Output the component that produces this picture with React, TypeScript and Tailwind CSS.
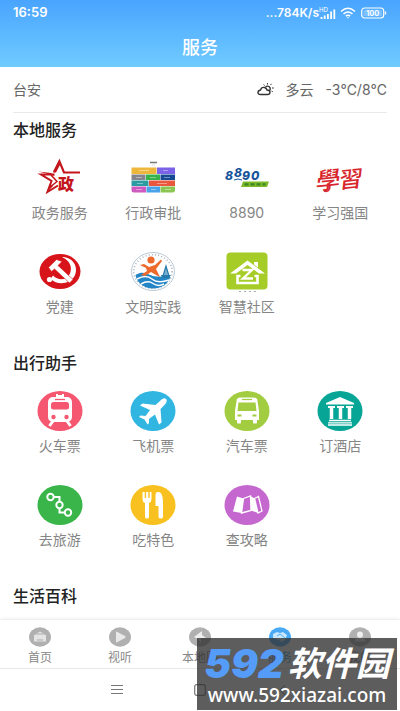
import type { ReactNode } from "react";

type Service = { label: string; icon: ReactNode };

function Disc({ color, children }: { color: string; children: ReactNode }) {
  return (
    <svg width="46" height="42" viewBox="0 0 46 42" fill="none" aria-hidden="true">
      <ellipse cx="23" cy="21" rx="22.500" ry="20" fill={color} />
      {children}
    </svg>
  );
}

const StarIcon = (
  <svg width="46" height="42" viewBox="0 0 46 42" fill="none" aria-hidden="true">
    <path d="M17 15 L22.500 4.500 L27 15.500 H43" stroke="#c4161c" strokeWidth="2.200" />
    <path d="M17.500 17.500 H4 L14.500 24 L10.500 35 L21 28.500" stroke="#c4161c" strokeWidth="2" />
    <path d="M14 18 L20 24.500 L14.500 29" stroke="#c4161c" strokeWidth="1.500" />
    <path d="M22.500 1.500 L16 15.500 L19 15.500 L23 8 Z M1.500 14.500 L14 16 L18 19 Z M9 36.500 L13 27 L16 29 Z" fill="#c4161c" />
    <text x="21" y="33" fontSize="16" fontWeight="900" fill="#c4161c" fontFamily="Noto Sans CJK SC, sans-serif">政</text>
  </svg>
);

const BlocksIcon = (
  <svg width="46" height="42" viewBox="0 0 46 42" aria-hidden="true">
    <path d="M20 5.500h7" stroke="#777" strokeWidth="1.500" />
    <path d="M22 8h3" stroke="#ddd" strokeWidth="1" />
    <rect x="1.500" y="10.500" width="25" height="6.500" fill="#efb63c" />
    <rect x="27" y="10.500" width="18" height="6.500" fill="#7b62e8" />
    <rect x="1.500" y="17.500" width="14" height="5.500" fill="#84858d" />
    <rect x="16" y="17.500" width="14" height="5.500" fill="#35b34a" />
    <rect x="30.500" y="17.500" width="14.500" height="5.500" fill="#164a94" />
    <rect x="1.500" y="23.500" width="17" height="5.500" fill="#2b9da1" />
    <rect x="19" y="23.500" width="26" height="5.500" fill="#e9573f" />
    <path d="M1.500 29.500h14.500v6h-12q-2.500 0-2.500-2.500z" fill="#d05bc0" />
    <rect x="16.500" y="29.500" width="13.500" height="6" fill="#4aa3e8" />
    <path d="M30.500 29.500h14.500v3.500q0 2.500-2.500 2.500h-12z" fill="#8bc653" />
    <path d="M9 13.500h10M33 13.500h5M6 20.500h6M20 20.500h6M34 20.500h6M7 26.500h6M27 26.500h10M6 32.500h6M21 32.500h5M35 32.500h6" stroke="#fff" strokeOpacity=".4" strokeWidth="1" />
  </svg>
);

const HotlineIcon = (
  <svg width="46" height="42" viewBox="0 0 46 42" aria-hidden="true">
    <g fontFamily="Inter, sans-serif" fontWeight="800" fontStyle="italic" fill="#17559b">
      <text x="1" y="23" fontSize="12">8</text>
      <text x="10" y="20" fontSize="12">8</text>
      <text x="18" y="23" fontSize="12">9</text>
      <text x="27" y="23" fontSize="12">0</text>
    </g>
    <path d="M10 23q4-2 8 0" stroke="#17559b" strokeWidth="1" fill="none" />
    <path d="M19 24.500h26l-2 5.500H17z" fill="#7cba2a" />
    <path d="M20.500 27.300h21" stroke="#3d8526" strokeWidth="2.200" strokeDasharray="4 2" />
  </svg>
);

const StudyIcon = (
  <svg width="50" height="42" viewBox="0 0 50 42" aria-hidden="true">
    <g transform="skewX(-12) rotate(-6 25 21)" fontFamily="Noto Sans CJK TC, sans-serif" fontWeight="500" fill="#d8262c">
      <text x="6" y="31" fontSize="24">學</text>
      <text x="29" y="32" fontSize="23">習</text>
    </g>
    <path d="M15 28q0 8-6 6" stroke="#d8262c" strokeWidth="1.500" fill="none" />
  </svg>
);

const PartyIcon = (
  <svg width="46" height="42" viewBox="0 0 46 42" fill="none" aria-hidden="true">
    <ellipse cx="23" cy="20.500" rx="20.500" ry="17.500" fill="#d7141a" />
    <path d="M25 6C36 6 41.500 16 38 24C34 33 21 35 13.500 28L16 24.500C22 30.500 30 29 33 22.500C35.500 16 33 9.500 25 6Z" fill="#fff" />
    <path d="M11.500 16.500L19.500 8.500L25 10.500L21 14.500L36 28.500L32.500 32L17.500 18L14.500 20.500Z" fill="#fff" stroke="#d7141a" strokeWidth=".600" />
    <circle cx="12.500" cy="28.500" r="2.600" fill="#fff" />
  </svg>
);

const CivicIcon = (
  <svg width="46" height="42" viewBox="0 0 46 42" fill="none" aria-hidden="true">
    <ellipse cx="23" cy="20.500" rx="21.500" ry="19" fill="#fff" stroke="#bccad6" strokeWidth="1" />
    <ellipse cx="23" cy="20.500" rx="19.200" ry="16.800" stroke="#a3b0bc" strokeWidth="1.500" strokeDasharray="1 2.200" />
    <path d="M5.500 24C15 18 20 26 27 25.500L40.500 26C37 34 31 37.500 23 37.500C14 37.500 7 32 5.500 24Z" fill="#2385c5" />
    <path d="M7 28q9-5 15 0t17 1M11 33q7-4 12-.5t11 .5" stroke="#fff" strokeWidth="1.500" />
    <circle cx="21" cy="9" r="3.600" fill="#ee692c" />
    <path d="M10 14L14 13L19 16L25 14L31 8.500L32 10L26 18L30 26L26 24L21 21L15 25L11 24L17 20L16 17Z" fill="#ee692c" />
    <path d="M33 25L36 15L39 25Z" fill="#79afd0" stroke="#2779ab" strokeWidth="1.200" />
    <path d="M31 24h10l-2 3h-7z" fill="#2779ab" />
  </svg>
);

const CommunityIcon = (
  <svg width="46" height="42" viewBox="0 0 46 42" fill="none" aria-hidden="true">
    <rect x="2.500" y="1.500" width="41" height="37" rx="4" fill="#a5cc27" />
    <path d="M6 22.500L23.500 9.500L41 22.500H35L23.500 14L12 22.500Z" fill="#fff" />
    <path d="M30 11h4v5.500l-4-3z" fill="#fff" />
    <path d="M16.500 25H13.500V32H33.500V25H30.500" stroke="#fff" strokeWidth="2.600" />
    <path d="M18.500 19H28L19 27.500H29" stroke="#fff" strokeWidth="2.400" />
    <path d="M15 40.500h17" stroke="#aaa" strokeWidth="1" strokeDasharray="2 3" />
  </svg>
);

const TrainIcon = (
  <Disc color="#f65770">
    <path d="M20 4v3M26 4v3M19 6h8" stroke="#fff" strokeWidth="2" />
    <rect x="11" y="7" width="24" height="25" rx="5" fill="#fff" />
    <path d="M18 9.500h10" stroke="#f65770" strokeWidth="1.300" />
    <rect x="14" y="12" width="18" height="7.500" rx="2.500" fill="#f65770" />
    <circle cx="16.500" cy="27" r="2.200" fill="#f65770" />
    <circle cx="29.500" cy="27" r="2.200" fill="#f65770" />
    <path d="M16 31L12.500 36M30 31L33.500 36" stroke="#fff" strokeWidth="3" />
  </Disc>
);

const PlaneIcon = (
  <Disc color="#31b5e1">
    <path d="M36 9C37.500 10.500 36.500 13 34 15.500L30.500 19L31.500 32.500L29 34.500L25 24.500L19 29L19 33L17.500 34.500L14.500 29.500L9 27L10.500 25.500L15.500 26L20 20L10 15.500L12.500 13.500L25.500 15L30 11C32.500 8.500 34.500 7.500 36 9Z" fill="#fff" />
  </Disc>
);

const BusIcon = (
  <Disc color="#a2cd40">
    <path d="M12.500 11q0-3.500 4-3.500h13q4 0 4 3.500l1.500 10v9H11v-9z" fill="#fff" />
    <path d="M18 9.500h10" stroke="#a2cd40" strokeWidth="1.200" />
    <path d="M14.500 12.500h17l1 8.500h-19z" fill="#a2cd40" />
    <path d="M13.500 25.500h4M28.500 25.500h4" stroke="#a2cd40" strokeWidth="2.200" />
    <rect x="13" y="29" width="4" height="4.500" rx="1" fill="#fff" />
    <rect x="29" y="29" width="4" height="4.500" rx="1" fill="#fff" />
  </Disc>
);

const HotelIcon = (
  <Disc color="#07a595">
    <path d="M23 7L37 13V14.500H9V13Z" fill="#fff" />
    <path d="M11 17h7M20 17h7M29 17h7" stroke="#fff" strokeWidth="2" />
    <path d="M14.500 17v12M23.500 17v12M32.500 17v12" stroke="#fff" strokeWidth="3.500" />
    <path d="M12 30.500h22M11 32.800h24M11 35h24" stroke="#fff" strokeWidth="1.300" />
  </Disc>
);

const RouteIcon = (
  <Disc color="#39b54a">
    <g stroke="#fff" strokeWidth="2">
      <circle cx="13.500" cy="13" r="3.200" />
      <circle cx="22.500" cy="21" r="3.200" />
      <circle cx="31" cy="28.500" r="3.200" />
      <path d="M17 13h5.500v4.500M22.500 24.500v4h5" />
    </g>
  </Disc>
);

const FoodIcon = (
  <Disc color="#f8c120">
    <path d="M12.500 8v7q0 3 2.500 4v14q0 1.500 2 1.500t2-1.500V19q2.500-1 2.500-4V8h-1.800v6h-1.400V8h-2.200v6h-1.400V8z" fill="#fff" />
    <path d="M25.500 11q0-3.500 3-3c3.500.5 4.500 5 4.500 11v14q0 1.500-2.200 1.500t-2.300-1.500V22h-3z" fill="#fff" />
  </Disc>
);

const MapIcon = (
  <Disc color="#c467ce">
    <path d="M13 12.500L19.500 14.500L17.500 29L9 27.500Z" fill="#fff" />
    <path d="M19.500 14.500L26.500 12L27 26.500L17.500 29Z" stroke="#fff" strokeWidth="1.300" />
    <path d="M26.500 12L30.500 14.500L34 29L27 26.500Z" fill="#fff" />
    <path d="M30.500 14.500L34.500 12.500L38 27L34 29Z" stroke="#fff" strokeWidth="1.300" />
  </Disc>
);

const localServices: Service[] = [
  { label: "政务服务", icon: StarIcon },
  { label: "行政审批", icon: BlocksIcon },
  { label: "8890", icon: HotlineIcon },
  { label: "学习强国", icon: StudyIcon },
  { label: "党建", icon: PartyIcon },
  { label: "文明实践", icon: CivicIcon },
  { label: "智慧社区", icon: CommunityIcon },
];

const travelServices: Service[] = [
  { label: "火车票", icon: TrainIcon },
  { label: "飞机票", icon: PlaneIcon },
  { label: "汽车票", icon: BusIcon },
  { label: "订酒店", icon: HotelIcon },
  { label: "去旅游", icon: RouteIcon },
  { label: "吃特色", icon: FoodIcon },
  { label: "查攻略", icon: MapIcon },
];

function Section({ title, items }: { title: string; items: Service[] }) {
  return (
    <section className="mb-[11px]">
      <h2 className="h-[34px] text-base leading-[34px] font-medium text-[#222]">{title}</h2>
      <div className="grid grid-cols-4">
        {items.map((item) => (
          <button key={item.label} type="button" className="flex h-[94px] flex-col items-center pt-[10px]">
            <span className="flex h-[42px] items-center">{item.icon}</span>
            <span className="mt-1 text-sm leading-5 text-[#858585]">{item.label}</span>
          </button>
        ))}
      </div>
    </section>
  );
}

function TabDisc({ active, children }: { active?: boolean; children: ReactNode }) {
  return (
    <svg width="22" height="20" viewBox="0 0 22 20" fill="none" aria-hidden="true">
      <ellipse cx="11" cy="10" rx="11" ry="9.700" fill={active ? "#48a9f7" : "#b0b0b0"} />
      {children}
    </svg>
  );
}

const tabs = [
  {
    label: "首页",
    icon: (
      <TabDisc>
        <path d="M5 8L11 4.500L17 8V14.500H5Z" fill="#e4e4e4" />
        <path d="M6 7h10M8 13h6" stroke="#aaa" />
      </TabDisc>
    ),
  },
  { label: "视听", icon: <TabDisc><path d="M7 5.500Q7 4 8.500 5L16 9Q17.500 10 16 11L8.500 15Q7 16 7 14.500Z" fill="#e8e8e8" /></TabDisc> },
  { label: "本地圈", icon: <TabDisc><path d="M5 10L13 4V8L17 11H12V16L9 12Z" fill="#eee" /></TabDisc> },
  {
    label: "服务",
    active: true,
    icon: (
      <TabDisc active>
        <path d="M4 7l4-2 3 1 3-1 4 3-2 5-4 2-5-3-3-1z" fill="#c9e7ff" />
        <path d="M8 9l3-2 5 4M10 13l2 1" stroke="#52aff8" />
      </TabDisc>
    ),
  },
  {
    label: "我的",
    icon: (
      <TabDisc>
        <circle cx="11" cy="7.500" r="3" fill="#eee" />
        <path d="M5.500 14.500q0-4 5.500-4t5.500 4z" fill="#eee" />
      </TabDisc>
    ),
  },
];

export default function App() {
  return (
    <div className="relative flex h-screen flex-col overflow-hidden bg-white font-[Inter,'Noto_Sans_CJK_SC',sans-serif]">
      <header className="h-[67px] shrink-0 bg-linear-to-b from-[#49a4ff] to-[#70cbff] text-white">
        <div className="flex h-[26px] items-center justify-between px-[13px]">
          <span className="text-[13px] font-semibold">16:59</span>
          <div className="flex items-center">
            <span className="text-xs font-semibold">...784K/s</span>
            <svg width="17" height="13" viewBox="0 0 17 13" aria-label="HD" className="mr-1">
              <text x="0" y="4.500" fontSize="6" fill="#fff" fontFamily="Inter, sans-serif">HD</text>
              <path d="M2.500 12v-2M5.700 12V8.500M8.900 12V7M12.100 12V4.500M15.300 12V2.500" stroke="#fff" strokeWidth="1.800" />
            </svg>
            <svg width="16" height="12" viewBox="0 0 16 12" fill="none" aria-hidden="true" className="mr-[5px]">
              <path d="M1 4.500Q8-2 15 4.500M3.500 7Q8 3 12.500 7M5.800 9.200Q8 7.400 10.200 9.200" stroke="#fff" strokeWidth="1.500" />
              <path d="M6.800 10.200h2.400L8 11.500z" fill="#fff" />
            </svg>
            <svg width="26" height="12" viewBox="0 0 26 12" aria-hidden="true">
              <rect x=".7" y="1" width="22" height="10" rx="3" fill="none" stroke="#fff" strokeWidth="1.200" />
              <rect x="2.500" y="2.700" width="18.500" height="6.600" rx="1.500" fill="#fff" fillOpacity=".25" />
              <text x="11.700" y="8.700" fontSize="7.500" fontWeight="600" fill="#fff" textAnchor="middle" fontFamily="Inter, sans-serif">100</text>
              <path d="M24.500 4.500v3" stroke="#fff" strokeWidth="1.300" />
            </svg>
          </div>
        </div>
        <h1 className="text-center text-lg leading-[44px] font-medium">服务</h1>
      </header>

      <main className="min-h-0 flex-1 overflow-hidden px-[13px]">
        <div className="flex h-[46px] items-center border-b border-[#e9e9e9] text-sm text-[#666]">
          <span>台安</span>
          <svg width="17" height="13" viewBox="0 0 17 13" fill="none" aria-hidden="true" className="mr-[11px] ml-auto">
            <path d="M3.500 11.500Q1 11.500 1 9.500T3.500 7Q4.500 3.700 7.500 4.500Q9.500 5 10 7Q13 7 13 9.300Q13 11.500 10.500 11.500Z" stroke="#333" strokeWidth="1.400" />
            <path d="M8.500 4Q10 2.500 12 3.500Q14 5 12.800 7.500" stroke="#333" strokeWidth="1.300" />
            <path d="M7.500 2.500l-.8-1M10.500 1.500V0M13.500 2l1-1.200M15 5h1.800M14.500 8l1.300.8" stroke="#333" />
          </svg>
          <span className="mr-3">多云</span>
          <span>-3℃/8℃</span>
        </div>
        <Section title="本地服务" items={localServices} />
        <Section title="出行助手" items={travelServices} />
        <h2 className="h-[34px] text-base leading-[34px] font-medium text-[#222]">生活百科</h2>
      </main>

      <nav className="grid h-12 shrink-0 grid-cols-5 shadow-[0_-1px_3px_#00000018]">
        {tabs.map((tab) => (
          <button key={tab.label} type="button" className="flex flex-col items-center pt-[7px]">
            {tab.icon}
            <span className={tab.active ? "mt-[3px] text-xs leading-4 text-[#48a9f7]" : "mt-[3px] text-xs leading-4 text-[#888]"}>
              {tab.label}
            </span>
          </button>
        ))}
      </nav>

      <div className="flex h-[43px] shrink-0 items-center justify-around border-t border-[#e8e8e8] px-[76px] text-[#777]">
        <button type="button" aria-label="菜单">
          <svg width="12" height="10" viewBox="0 0 12 10" aria-hidden="true">
            <path d="M0 .5h12M0 4.500h12M0 8.500h12" stroke="currentColor" />
          </svg>
        </button>
        <button type="button" aria-label="主屏幕">
          <svg width="12" height="12" viewBox="0 0 12 12" aria-hidden="true">
            <rect x=".7" y=".7" width="10.600" height="10.600" rx="2" fill="none" stroke="currentColor" strokeWidth="1.200" />
          </svg>
        </button>
        <button type="button" aria-label="返回">
          <svg width="12" height="12" viewBox="0 0 12 12" aria-hidden="true">
            <path d="M8 1L3 6l5 5" fill="none" stroke="currentColor" />
          </svg>
        </button>
      </div>

      <div className="absolute right-[3px] bottom-[1px] flex h-[72px] w-[200px] flex-col items-center bg-[#303030]/78 whitespace-nowrap text-white">
        <div className="flex h-[44px] items-center gap-1 pt-2">
          <span className="text-[40px] leading-[32px] font-black text-[#559cf8] italic">592</span>
          <span className="text-[34px] leading-[32px] font-bold italic">软件园</span>
        </div>
        <div className="font-['Noto_Sans',sans-serif] text-[19px] leading-[26px] font-medium">www.592xiazai.com</div>
      </div>
    </div>
  );
}
